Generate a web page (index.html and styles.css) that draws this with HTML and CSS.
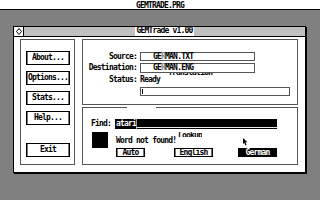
FILE: index.html
```html
<!DOCTYPE html>
<html>
<head>
<meta charset="utf-8">
<link rel="stylesheet" href="styles.css">
</head>
<body>
<div class="menubar">GEMTRADE.PRG</div>
<div class="desktop">
  <div class="window">
    <div class="titlebar">
      <div class="closer">
        <svg width="6" height="7" viewBox="0 0 6 7"><polygon points="3,0.5 5.5,3.5 3,6.5 0.5,3.5" fill="none" stroke="#000" stroke-width="1"/></svg>
      </div>
      <div class="title-area"><span class="title">GEMTrade v1.00</span></div>
    </div>
    <div class="work">
      <div class="panel side">
        <div class="btn">About...</div>
        <div class="btn">Options...</div>
        <div class="btn">Stats...</div>
        <div class="btn">Help...</div>
        <div class="btn exit">Exit</div>
      </div>
      <div class="col">
        <div class="panel trans">
          <div class="row r-src"><span class="label">Source:</span><span class="field f-short">GE<span class="smudge">R</span>MAN.TXT</span></div>
          <div class="row r-dst"><span class="label">Destination:</span><span class="field f-short">GE<span class="smudge">R</span>MAN.ENG</span></div>
          <div class="row r-status"><span class="label">Status:</span><span class="value">Ready</span></div>
          <div class="row r-input"><span class="label"></span><span class="field f-long"><span class="caret"></span></span></div>
          <span class="ghost ghost-trans">Translation</span>
        </div>
        <div class="panel lookup">
          <div class="find-row">
            <span class="find-label">Find:</span>
            <div class="find-bar"><span>atari</span><span class="cursor"></span><span class="blanks">___________________________________</span></div>
          </div>
          <div class="result-row">
            <div class="swatch"></div>
            <div class="result">
              <div class="msg">Word not found!</div>
              <div class="lang-row">
                <div class="lbtn auto">Auto</div>
                <div class="lbtn english">English</div>
                <div class="lbtn german">German</div>
              </div>
            </div>
          </div>
          <div class="ghost ghost-lookup"><span>Lookup</span></div>
          <svg class="pointer" width="5" height="8" viewBox="0 0 5 8"><polygon points="0,0 0,6 1.3,4.8 2.4,7.6 3.5,7 2.5,4.3 4.5,4.3" fill="#000"/></svg>
        </div>
      </div>
    </div>
  </div>
</div>
</body>
</html>
```
FILE: styles.css
```css
* {
  box-sizing: border-box;
  margin: 0;
  padding: 0;
}

body {
  margin: 0;
  width: 320px;
  height: 200px;
  overflow: hidden;
  background: #808080;
  font-family: "DejaVu Sans Mono", monospace;
  font-size: 8px;
  line-height: 8px;
  letter-spacing: -0.8px;
  font-weight: bold;
  color: #000;
  white-space: nowrap;
}

.menubar {
  height: 10px;
  padding-top: 2px;
  background: #fff;
  border-bottom: 1px solid #000;
  text-align: center;
  line-height: 7px;
}

.desktop {
  padding: 16px 0 0 13px;
}

.window {
  width: 293px;
  height: 147px;
  border: 1px solid #000;
  box-shadow: 1px 1px 0 #000;
  background: #fff;
  display: flex;
  flex-direction: column;
}

.titlebar {
  height: 10px;
  border-bottom: 1px solid #000;
  display: flex;
}

.closer {
  width: 10px;
  border-right: 1px solid #000;
  background: #fff;
  display: flex;
  align-items: center;
  justify-content: center;
}

.closer svg {
  display: block;
}

.title-area {
  flex: 1;
  background: #c0c0c0;
  display: flex;
  justify-content: center;
}

.title {
  background: #fff;
  height: 9px;
  padding: 0 1px;
  line-height: 8px;
}

.work {
  flex: 1;
  display: flex;
  align-items: flex-start;
  gap: 7px;
  padding: 2px 7px 0 6px;
}

.panel {
  border: 1px solid #555;
}

.side {
  width: 55px;
  height: 126px;
  padding: 11px 0 0 5px;
  display: flex;
  flex-direction: column;
  gap: 6px;
}

.btn {
  width: 44px;
  height: 14px;
  padding-top: 2px;
  border: 1px solid #000;
  box-shadow: inset 1px 0 #777, inset -1px 0 #777;
  text-align: center;
  line-height: 8px;
}

.btn.exit {
  margin-top: 12px;
}

.col {
  width: 216px;
  display: flex;
  flex-direction: column;
  gap: 2px;
}

.trans {
  position: relative;
  height: 66px;
  padding-top: 12px;
}

.row {
  display: flex;
}

.label {
  width: 54px;
  margin-right: 3px;
  text-align: right;
}

.field {
  position: relative;
  z-index: 1;
  display: block;
  background: #fff;
  border: 1px solid #555;
  padding-left: 12px;
}

.f-short {
  width: 115px;
}

.f-long {
  width: 150px;
  padding-left: 0;
}

.r-src {
  height: 9px;
}

.r-src .label {
  line-height: 9px;
}

.r-src .field {
  height: 9px;
  line-height: 7px;
}

.r-dst {
  height: 10px;
  margin-top: 2px;
}

.r-dst .label {
  line-height: 10px;
}

.r-dst .field {
  height: 10px;
  line-height: 8px;
}

.r-status {
  height: 8px;
  margin-top: 3px;
}

.r-input {
  height: 9px;
  margin-top: 3px;
}

.r-input .field {
  height: 9px;
}

.smudge {
  color: #8a8a8a;
}

.caret {
  display: block;
  width: 1px;
  height: 5px;
  margin: 1px 0 0 1px;
  background: #000;
}

.ghost {
  position: absolute;
  z-index: 0;
}

.ghost-trans {
  left: 85px;
  top: 29px;
}

.lookup {
  position: relative;
  height: 58px;
}

.lookup::before {
  content: "";
  position: absolute;
  top: -1px;
  left: 44px;
  width: 29px;
  height: 1px;
  background: #fff;
}

.find-row {
  display: flex;
  align-items: center;
  height: 10px;
  margin-top: 11px;
  padding-left: 8px;
}

.find-label {
  width: 24px;
}

.find-bar {
  width: 162px;
  height: 10px;
  padding: 1px 0 0 1px;
  background: #000;
  color: #fff;
  display: flex;
  overflow: hidden;
}

.cursor {
  width: 1px;
  height: 10px;
  margin-top: -1px;
  background: #9a9a9a;
}

.result-row {
  display: flex;
  margin-top: 3px;
  padding-left: 9px;
}

.swatch {
  width: 16px;
  height: 16px;
  margin-right: 8px;
  background: #000;
}

.result {
  display: flex;
  flex-direction: column;
  padding-top: 5px;
}

.msg {
  height: 8px;
}

.lang-row {
  display: flex;
  margin-top: 3px;
}

.lbtn {
  height: 9px;
  border: 1px solid #000;
  box-shadow: inset 1px 0 #777, inset -1px 0 #777;
  text-align: center;
  line-height: 7px;
}

.auto {
  width: 29px;
}

.english {
  width: 39px;
  margin-left: 29px;
}

.german {
  width: 39px;
  margin-left: 25px;
  background: #000;
  color: #fff;
  box-shadow: none;
}

.ghost-lookup {
  left: 95px;
  top: 24px;
  height: 5px;
  overflow: hidden;
}

.pointer {
  position: absolute;
  left: 160px;
  top: 30px;
}
```
